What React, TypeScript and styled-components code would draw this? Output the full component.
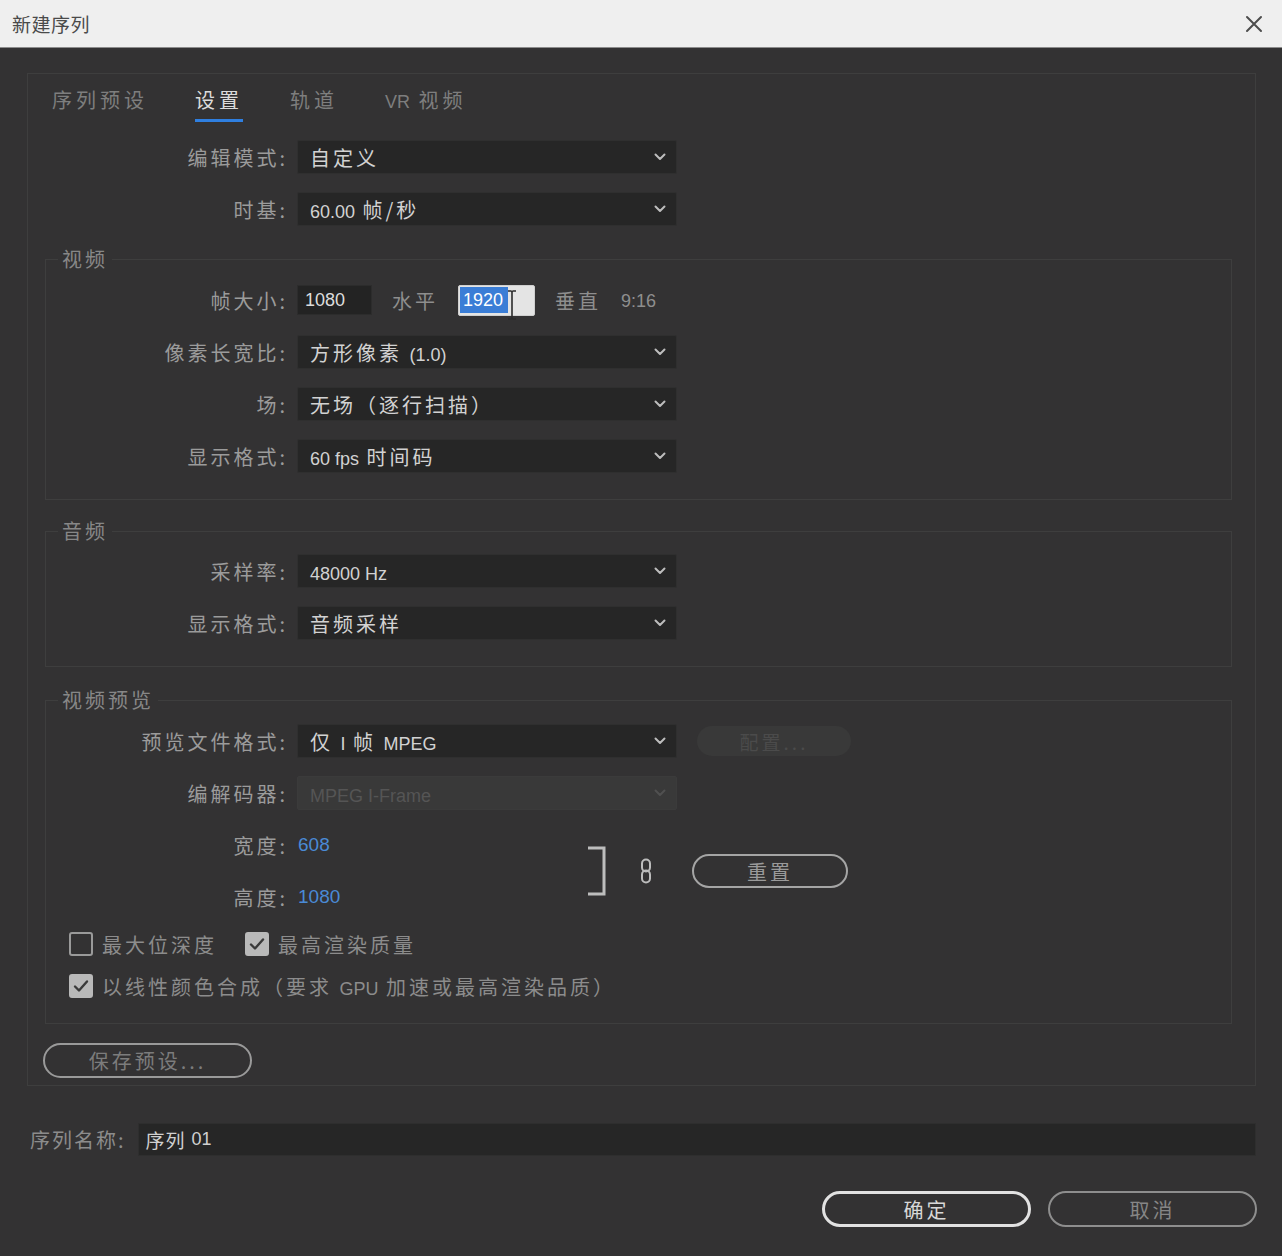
import React from "react";
import styled, { createGlobalStyle } from "styled-components";

const Global = createGlobalStyle`
  html, body { margin: 0; padding: 0; background: #333233; }
  body { font-family: "Noto Sans CJK SC", "Noto Sans", sans-serif; }
  * { box-sizing: border-box; }
`;

const Window = styled.div`
  width: 1282px;
  height: 1256px;
  background: #333233;
  overflow: hidden;
  display: flex;
  flex-direction: column;
`;

const TitleBar = styled.div`
  flex: none;
  height: 48px;
  background: #efefef;
  border-bottom: 1px solid #8c8c8c;
  display: flex;
  align-items: center;
  justify-content: space-between;
  padding: 0 19px 0 12px;
`;

const Title = styled.div`
  font-size: 19px;
  color: #4a4a4a;
  letter-spacing: 0.5px;
`;

const Body = styled.div`
  padding: 25px 26px 0 27px;
  display: flex;
  flex-direction: column;
`;

const OuterPanel = styled.div`
  border: 1px solid #3e3e3e;
  padding: 0 0 7px 0;
  display: flex;
  flex-direction: column;
`;

const TabBar = styled.div`
  display: flex;
  gap: 47px;
  padding: 14px 0 0 24px;
`;

const Tab = styled.div<{ $active?: boolean }>`
  font-size: 20px;
  letter-spacing: 4px;
  line-height: 24px;
  padding: 0 0 5px 0;
  color: ${(p) => (p.$active ? "#dcdcdc" : "#7e7e7e")};
  border-bottom: 3px solid ${(p) => (p.$active ? "#2f7fe0" : "transparent")};
`;

const TopRows = styled.div`
  display: flex;
  flex-direction: column;
  gap: 18px;
  margin-top: 18px;
  padding-left: 18px;
`;

const Group = styled.fieldset<{ $top: number; $pt: number; $pb: number }>`
  margin: ${(p) => p.$top}px 23px 0 17px;
  padding: ${(p) => p.$pt}px 0 ${(p) => p.$pb}px 0;
  border: 1px solid #3e3e3e;
  min-width: 0;
`;

const Legend = styled.legend`
  margin-left: 12px;
  padding: 0 4px;
  font-size: 20px;
  line-height: 22px;
  letter-spacing: 3px;
  color: #878787;
`;

const GroupBody = styled.div`
  display: flex;
  flex-direction: column;
  gap: 18px;
`;

const Row = styled.div`
  display: flex;
  align-items: center;
  height: 34px;
`;

const Label = styled.div`
  width: 242px;
  margin-right: 9px;
  text-align: right;
  font-size: 20px;
  letter-spacing: 3px;
  color: #9b9b9b;
  white-space: nowrap;
`;

const Lat = styled.span`
  font-family: "Liberation Sans", "Noto Sans", sans-serif;
  letter-spacing: 0;
  font-size: 18px;
`;

const SelectBox = styled.div<{ $disabled?: boolean }>`
  width: 380px;
  height: 34px;
  display: flex;
  align-items: center;
  justify-content: space-between;
  padding: 0 10px 0 12px;
  background: ${(p) => (p.$disabled ? "#393939" : "#262626")};
  border: 1px solid ${(p) => (p.$disabled ? "#3b3b3b" : "#2f2f2f")};
  border-radius: 2px;
  font-size: 20px;
  letter-spacing: 3px;
  color: ${(p) => (p.$disabled ? "#555555" : "#d2d2d2")};
  white-space: nowrap;
`;

const Chevron = ({ color = "#bdbdbd" }: { color?: string }) => (
  <svg width="12" height="8" viewBox="0 0 12 8">
    <polyline points="1.5,1.5 6,6 10.5,1.5" fill="none" stroke={color} strokeWidth="2" strokeLinecap="round" strokeLinejoin="round" />
  </svg>
);

const Select = ({ children, disabled }: { children: React.ReactNode; disabled?: boolean }) => (
  <SelectBox $disabled={disabled}>
    <span>{children}</span>
    <Chevron color={disabled ? "#505050" : "#bdbdbd"} />
  </SelectBox>
);

const Cluster = styled.div`
  display: flex;
  align-items: center;
  gap: 20px;
`;

const Word = styled.span`
  font-size: 20px;
  letter-spacing: 3px;
  color: #8e8e8e;
`;

const DarkInput = styled.div`
  width: 75px;
  height: 30px;
  background: #232323;
  border: 1px solid #2c2c2c;
  display: flex;
  align-items: center;
  padding-left: 7px;
  color: #dcdcdc;
`;

const LightInput = styled.div`
  position: relative;
  width: 77px;
  height: 31px;
  background: #e4e4e4;
  border: 1px solid #cfcfcf;
  border-radius: 2px;
  display: flex;
  align-items: center;
  padding-left: 1px;
`;

const Selection = styled.span`
  background: #3a7dd6;
  color: #ffffff;
  line-height: 25px;
  padding: 0 5px 0 3px;
`;

const IBeam = styled.svg`
  position: absolute;
  left: 48px;
  top: 4px;
`;

const Ratio = styled.span`
  color: #8e8e8e;
`;

const GhostButton = styled.div`
  margin-left: 20px;
  width: 154px;
  height: 30px;
  border-radius: 15px;
  background: #393939;
  display: flex;
  align-items: center;
  justify-content: center;
  font-size: 19px;
  letter-spacing: 3px;
  color: #4b4b4b;
`;

const DimsBlock = styled.div`
  display: flex;
  align-items: center;
`;

const DimsCol = styled.div`
  width: 542px;
  display: flex;
  flex-direction: column;
  gap: 18px;
`;

const BlueValue = styled.span`
  font-family: "Liberation Sans", "Noto Sans", sans-serif;
  font-size: 19px;
  color: #4a8ad6;
  padding-left: 1px;
`;

const LinkIcon = styled.svg`
  margin-left: 34px;
`;

const Pill = styled.div<{ $w: number; $h: number; $border: string; $bw: number; $color: string }>`
  width: ${(p) => p.$w}px;
  height: ${(p) => p.$h}px;
  border-radius: ${(p) => p.$h / 2}px;
  border: ${(p) => p.$bw}px solid ${(p) => p.$border};
  display: flex;
  align-items: center;
  justify-content: center;
  font-size: 20px;
  letter-spacing: 3px;
  color: ${(p) => p.$color};
  flex: none;
`;

const ResetWrap = styled.div`
  margin-left: 40px;
`;

const CheckRow = styled.div`
  display: flex;
  align-items: center;
  height: 24px;
  padding-left: 23px;
  gap: 28px;
`;

const CheckItem = styled.div`
  display: flex;
  align-items: center;
  gap: 9px;
  font-size: 20px;
  letter-spacing: 3px;
  color: #8c8c8c;
  white-space: nowrap;
`;

const Box = styled.span<{ $checked?: boolean }>`
  width: 24px;
  height: 24px;
  border-radius: 3px;
  border: 2px solid ${(p) => (p.$checked ? "#b9b9b9" : "#9a9a9a")};
  background: ${(p) => (p.$checked ? "#b9b9b9" : "transparent")};
  display: flex;
  align-items: center;
  justify-content: center;
  flex: none;
`;

const Check = ({ checked, children }: { checked?: boolean; children: React.ReactNode }) => (
  <CheckItem>
    <Box $checked={checked}>
      {checked && (
        <svg width="16" height="14" viewBox="0 0 16 14">
          <polyline points="2,7.5 6,11.5 14,2.5" fill="none" stroke="#3a3a3a" strokeWidth="2.4" strokeLinecap="round" strokeLinejoin="round" />
        </svg>
      )}
    </Box>
    <span>{children}</span>
  </CheckItem>
);

const SaveWrap = styled.div`
  margin: 19px 0 0 15px;
`;

const NameRow = styled.div`
  margin-top: 37px;
  display: flex;
  align-items: center;
  gap: 12px;
`;

const NameLabel = styled.div`
  padding-left: 3px;
  font-size: 20px;
  letter-spacing: 2px;
  color: #8c8c8c;
  white-space: nowrap;
`;

const NameInput = styled.div`
  flex: 1;
  height: 33px;
  background: #262626;
  border: 1px solid #2e2e2e;
  display: flex;
  align-items: center;
  gap: 6px;
  padding-left: 7px;
  font-size: 19px;
  letter-spacing: 1px;
  color: #d0d0d0;
`;

const ButtonRow = styled.div`
  margin-top: 35px;
  margin-right: -1px;
  display: flex;
  justify-content: flex-end;
  gap: 17px;
`;

export default function App() {
  return (
    <>
      <Global />
      <Window>
        <TitleBar>
          <Title>新建序列</Title>
          <svg width="18" height="18" viewBox="0 0 18 18">
            <path d="M2 2 L16 16 M16 2 L2 16" stroke="#4d4d4d" strokeWidth="2" strokeLinecap="round" />
          </svg>
        </TitleBar>
        <Body>
          <OuterPanel>
            <TabBar>
              <Tab>序列预设</Tab>
              <Tab $active>设置</Tab>
              <Tab>轨道</Tab>
              <Tab>
                <Lat>VR</Lat> 视频
              </Tab>
            </TabBar>

            <TopRows>
              <Row>
                <Label>编辑模式:</Label>
                <Select>自定义</Select>
              </Row>
              <Row>
                <Label>时基:</Label>
                <Select>
                  <Lat>60.00</Lat> 帧/秒
                </Select>
              </Row>
            </TopRows>

            <Group $top={22} $pt={13} $pb={26}>
              <Legend>视频</Legend>
              <GroupBody>
                <Row>
                  <Label>帧大小:</Label>
                  <Cluster>
                    <DarkInput>
                      <Lat>1080</Lat>
                    </DarkInput>
                    <Word>水平</Word>
                    <LightInput>
                      <Selection>
                        <Lat>1920</Lat>
                      </Selection>
                      <IBeam width="10" height="30" viewBox="0 0 10 30">
                        <path d="M1 1 H4 Q5 1 5 3 V27 Q5 29 4 29 H1 M9 1 H6 Q5 1 5 3 M5 27 Q5 29 6 29 H9" fill="none" stroke="#2b2b2b" strokeWidth="1.6" />
                      </IBeam>
                    </LightInput>
                    <Word>垂直</Word>
                    <Ratio>
                      <Lat>9:16</Lat>
                    </Ratio>
                  </Cluster>
                </Row>
                <Row>
                  <Label>像素长宽比:</Label>
                  <Select>
                    方形像素 <Lat>(1.0)</Lat>
                  </Select>
                </Row>
                <Row>
                  <Label>场:</Label>
                  <Select>无场（逐行扫描）</Select>
                </Row>
                <Row>
                  <Label>显示格式:</Label>
                  <Select>
                    <Lat>60 fps</Lat> 时间码
                  </Select>
                </Row>
              </GroupBody>
            </Group>

            <Group $top={20} $pt={12} $pb={26}>
              <Legend>音频</Legend>
              <GroupBody>
                <Row>
                  <Label>采样率:</Label>
                  <Select>
                    <Lat>48000 Hz</Lat>
                  </Select>
                </Row>
                <Row>
                  <Label>显示格式:</Label>
                  <Select>音频采样</Select>
                </Row>
              </GroupBody>
            </Group>

            <Group $top={22} $pt={13} $pb={25}>
              <Legend>视频预览</Legend>
              <GroupBody>
                <Row>
                  <Label>预览文件格式:</Label>
                  <Select>
                    仅 <Lat>I</Lat> 帧 <Lat>MPEG</Lat>
                  </Select>
                  <GhostButton>配置...</GhostButton>
                </Row>
                <Row>
                  <Label>编解码器:</Label>
                  <Select disabled>
                    <Lat>MPEG I-Frame</Lat>
                  </Select>
                </Row>
                <DimsBlock>
                  <DimsCol>
                    <Row>
                      <Label>宽度:</Label>
                      <BlueValue>608</BlueValue>
                    </Row>
                    <Row>
                      <Label>高度:</Label>
                      <BlueValue>1080</BlueValue>
                    </Row>
                  </DimsCol>
                  <svg width="18" height="50" viewBox="0 0 18 50">
                    <path d="M0 2 H16 V48 H0" fill="none" stroke="#bdbdbd" strokeWidth="3" />
                  </svg>
                  <LinkIcon width="12" height="26" viewBox="0 0 12 26">
                    <rect x="2" y="1.5" width="8" height="12" rx="4" fill="none" stroke="#bdbdbd" strokeWidth="2" />
                    <rect x="2" y="12.5" width="8" height="12" rx="4" fill="none" stroke="#bdbdbd" strokeWidth="2" />
                  </LinkIcon>
                  <ResetWrap>
                    <Pill $w={156} $h={34} $border="#a5a5a5" $bw={2} $color="#9a9a9a">
                      重置
                    </Pill>
                  </ResetWrap>
                </DimsBlock>
                <CheckRow>
                  <Check>最大位深度</Check>
                  <Check checked>最高渲染质量</Check>
                </CheckRow>
                <CheckRow>
                  <Check checked>
                    以线性颜色合成（要求 <Lat>GPU</Lat> 加速或最高渲染品质）
                  </Check>
                </CheckRow>
              </GroupBody>
            </Group>

            <SaveWrap>
              <Pill $w={209} $h={35} $border="#9a9a9a" $bw={2} $color="#7c7c7c">
                保存预设...
              </Pill>
            </SaveWrap>
          </OuterPanel>

          <NameRow>
            <NameLabel>序列名称:</NameLabel>
            <NameInput>
              <span>序列</span>
              <Lat>01</Lat>
            </NameInput>
          </NameRow>

          <ButtonRow>
            <Pill $w={209} $h={36} $border="#e2e2e2" $bw={3} $color="#d8d8d8">
              确定
            </Pill>
            <Pill $w={209} $h={36} $border="#8e8e8e" $bw={2} $color="#868686">
              取消
            </Pill>
          </ButtonRow>
        </Body>
      </Window>
    </>
  );
}
